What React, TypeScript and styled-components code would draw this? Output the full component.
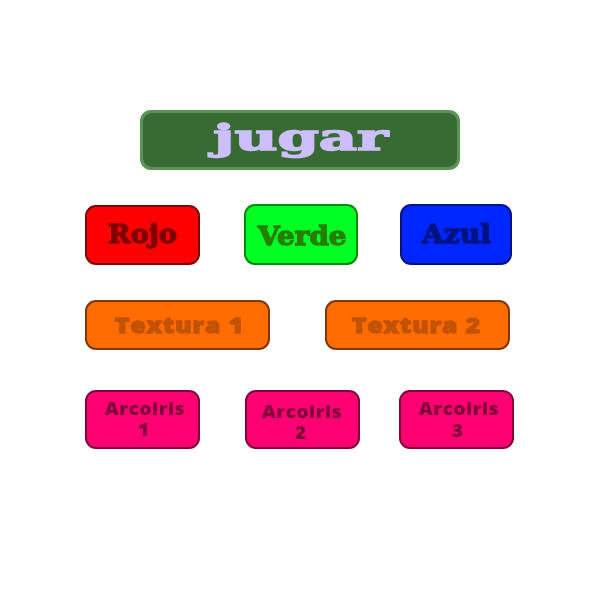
import React from "react";
import styled, { createGlobalStyle } from "styled-components";

const GlobalStyle = createGlobalStyle`
  body { margin: 0; background: #ffffff; }
  *, *::before, *::after { box-sizing: border-box; }
`;

const Menu = styled.main`
  display: flex;
  flex-direction: column;
  width: 600px;
  height: 600px;
  padding: 110px 85px 0;
  background: #fff;
  overflow: hidden;
`;

const Row = styled.div<{ $top?: number }>`
  display: flex;
  align-items: flex-end;
  margin-top: ${(p) => p.$top ?? 0}px;
`;

const Button = styled.button<{
  $w: number; $h: number; $gap?: number; $fill: string; $line: string; $ink: string;
}>`
  display: flex;
  flex-direction: column;
  align-items: flex-start;
  flex: none;
  width: ${(p) => p.$w}px;
  height: ${(p) => p.$h}px;
  margin: 0 0 0 ${(p) => p.$gap ?? 0}px;
  padding: 0;
  border: 2px solid ${(p) => p.$line};
  border-radius: 11px;
  background: ${(p) => p.$fill};
  color: ${(p) => p.$ink};
  cursor: pointer;
`;

const PlayButton = styled(Button)`
  border-width: 3px;
  background: ${(p) => p.$line};
`;

const PlayFace = styled.span`
  display: flex;
  width: 314px;
  height: 54px;
  border-radius: 9px;
  background: #386b33;
`;

const Label = styled.span<{ $x: number; $y: number; $sx: number }>`
  display: block;
  flex: none;
  margin: ${(p) => p.$y}px 0 0 ${(p) => p.$x}px;
  white-space: pre;
  transform: scaleX(${(p) => p.$sx});
  transform-origin: 0 50%;
  will-change: transform;
`;

const PlayLabel = styled(Label)`
  font: bold 35px/40px "DejaVu Serif", serif;
  -webkit-text-stroke: 1.4px currentColor;
`;

const ColorLabel = styled(Label)`
  font: bold 26px/30px "DejaVu Serif", serif;
  -webkit-text-stroke: 1.4px currentColor;
`;

const TextureLabel = styled(Label)`
  font: 800 21px/24px "Open Sans", sans-serif;
  letter-spacing: 0.8px;
  -webkit-text-stroke: 1.3px currentColor;
`;

const RainbowLabel = styled(Label)`
  font: 800 17.5px/20px "Open Sans", sans-serif;
  letter-spacing: 0.5px;
`;

const orange = { $w: 185, $h: 50, $fill: "#ff6c00", $line: "#803600", $ink: "#c45300" };
const pink = { $w: 115, $h: 59, $fill: "#ff0073", $line: "#80003a", $ink: "#80003a" };

export default function App() {
  return (
    <>
      <GlobalStyle />
      <Menu>
        <Row>
          <PlayButton $w={320} $h={60} $gap={55} $fill="#386b33" $line="#5c935a" $ink="#cdbfff">
            <PlayFace>
              <PlayLabel $x={70} $y={5} $sx={1.69}>jugar</PlayLabel>
            </PlayFace>
          </PlayButton>
        </Row>
        <Row $top={34}>
          <Button $w={115} $h={60} $fill="#ff0000" $line="#800000" $ink="#800000">
            <ColorLabel $x={21} $y={12} $sx={1.05}>Rojo</ColorLabel>
          </Button>
          <Button $w={114} $h={61} $gap={44} $fill="#00ff22" $line="#008a12" $ink="#268000">
            <ColorLabel $x={12} $y={15} $sx={1.07}>Verde</ColorLabel>
          </Button>
          <Button $w={112} $h={61} $gap={42} $fill="#0026ff" $line="#001380" $ink="#001380">
            <ColorLabel $x={20} $y={13} $sx={1.08}>Azul</ColorLabel>
          </Button>
        </Row>
        <Row $top={35}>
          <Button {...orange}>
            <TextureLabel $x={28} $y={11} $sx={1.17}>Textura 1</TextureLabel>
          </Button>
          <Button {...orange} $gap={55}>
            <TextureLabel $x={25} $y={11} $sx={1.17}>Textura 2</TextureLabel>
          </Button>
        </Row>
        <Row $top={40}>
          <Button {...pink}>
            <RainbowLabel $x={18} $y={6} $sx={1.08}>Arcoiris</RainbowLabel>
            <RainbowLabel $x={51} $y={1} $sx={1.08}>1</RainbowLabel>
          </Button>
          <Button {...pink} $gap={45}>
            <RainbowLabel $x={15} $y={9} $sx={1.08}>Arcoiris</RainbowLabel>
            <RainbowLabel $x={48} $y={1} $sx={1.08}>2</RainbowLabel>
          </Button>
          <Button {...pink} $gap={39}>
            <RainbowLabel $x={18} $y={6} $sx={1.08}>Arcoiris</RainbowLabel>
            <RainbowLabel $x={51} $y={2} $sx={1.08}>3</RainbowLabel>
          </Button>
        </Row>
      </Menu>
    </>
  );
}
